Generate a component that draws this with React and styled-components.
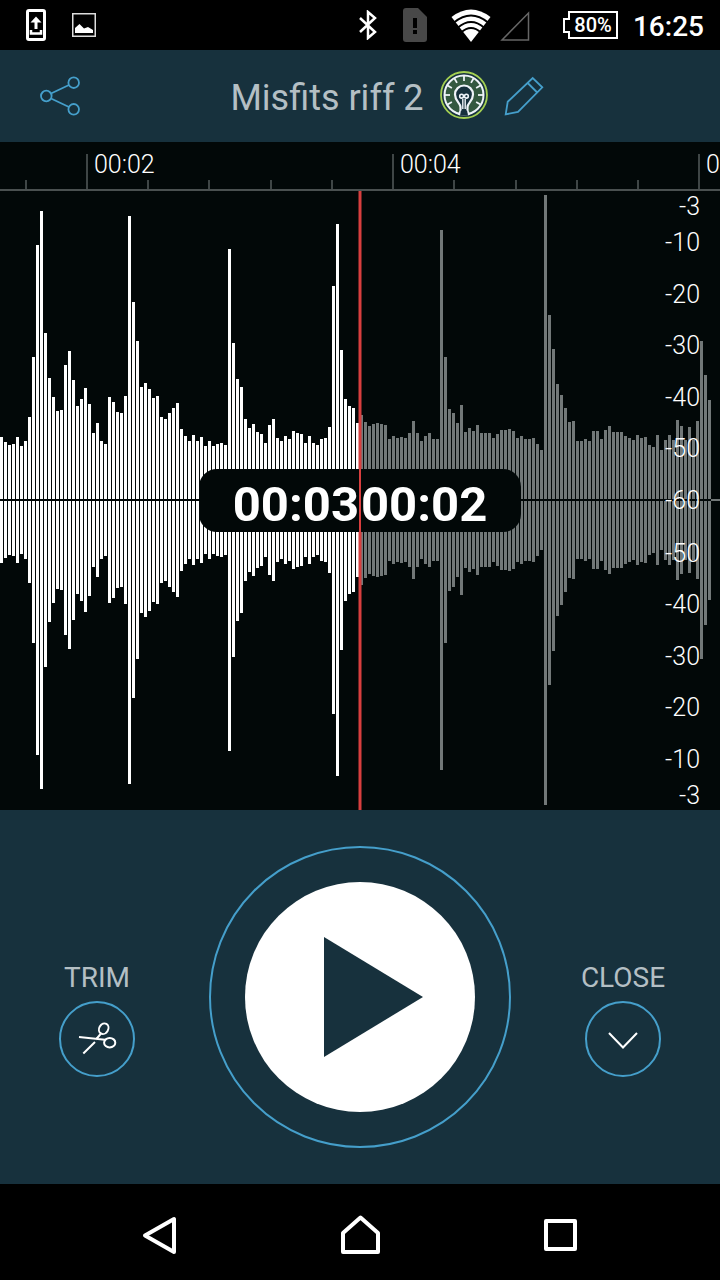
import React from 'react'
import styled, { createGlobalStyle } from 'styled-components';

const panel = '#17313d';
const accent = '#459fcb';
const muted = '#b4bfc4';
const ink = '#020808';
const red = '#d83f3f';

const GlobalStyle = createGlobalStyle`
  body {
    margin: 0;
    background-color: #000;
    font-family: Roboto, "Liberation Sans", sans-serif;
  }
  svg {
    display: block;
    flex-shrink: 0;
  }
`;

const Page = styled.div`
  display: flex;
  flex-direction: column;
  min-height: 100vh;
  background-color: ${panel};
`;

const StatusBar = styled.div`
  display: flex;
  align-items: center;
  justify-content: space-between;
  height: 50px;
  padding: 0 16px 0 26px;
  background-color: #000;
  color: #fff;
`;

const Group = styled.div`
  display: flex;
  align-items: center;
  gap: ${props => props.$gap}px;
`;

const Clock = styled.time`
  padding-top: 4px;
  font-size: 28px;
  font-weight: 500;
  line-height: 32px;
`;

const Header = styled.header`
  display: flex;
  align-items: center;
  height: 92px;
  padding: 0 26px 0 40px;
`;

const Heading = styled.div`
  display: flex;
  flex-grow: 1;
  align-items: center;
  justify-content: center;
  gap: 16px;
`;

const Title = styled.h1`
  margin: 0;
  padding-top: 4px;
  color: ${muted};
  font-size: 36px;
  font-weight: 400;
  line-height: 44px;
`;

const IconButton = styled.button`
  padding: 0;
  border: none;
  background: none;
  color: ${accent};
  cursor: pointer;
`;

const Editor = styled.main`
  position: relative;
  background-color: ${ink};
`;

const Chart = styled.svg`
  width: 100%;
  height: 668px;
  font-size: 25px;
  font-weight: 300;
  fill: #fff;
`;

const TimeBadge = styled.div`
  position: absolute;
  top: 327px;
  left: 50%;
  display: flex;
  justify-content: center;
  width: 322px;
  height: 63px;
  transform: translateX(-50%);
  border-radius: 18px;
  background-color: ${ink};
  color: #fff;
  font-size: 49px;
  font-weight: 700;
  line-height: 71px;
`;

const Elapsed = styled.span`
  flex: 1;
  border-right: 1px solid ${red};
  text-align: right;
`;

const Remaining = styled.span`
  flex: 1;
  border-left: 1px solid ${red};
`;

const Controls = styled.section`
  display: flex;
  flex-grow: 1;
  align-items: center;
  justify-content: space-between;
  padding: 36px 55px;
`;

const SideButton = styled.button`
  display: flex;
  flex-direction: column;
  align-items: center;
  gap: 7px;
  width: 84px;
  margin-top: 45px;
  padding: 0;
  border: none;
  background: none;
  color: ${muted};
  font-family: inherit;
  font-size: 28px;
  line-height: 32px;
  cursor: pointer;
`;

const Ring = styled.span`
  display: flex;
  align-items: center;
  justify-content: center;
  box-sizing: border-box;
  width: 76px;
  height: 76px;
  border: 2px solid ${accent};
  border-radius: 50%;
  color: #fff;
`;

const PlayButton = styled.button`
  display: flex;
  align-items: center;
  justify-content: center;
  box-sizing: border-box;
  width: 302px;
  height: 302px;
  padding: 0;
  border: 2px solid ${accent};
  border-radius: 50%;
  background: none;
  cursor: pointer;
`;

const NavBar = styled.nav`
  display: flex;
  align-items: center;
  height: 96px;
  padding: 0 60px;
  background-color: #000;
`;

const NavButton = styled.button`
  display: flex;
  flex: 1;
  justify-content: center;
  padding: 0;
  border: none;
  background: none;
  color: #fff;
  cursor: pointer;
`;

// half height of every bar, one bar per 4px
const peaks = [
  63, 58, 55, 56, 63, 54, 59, 83, 143, 255, 289, 167, 122, 103, 89,
  90, 135, 149, 120, 94, 101, 112, 96, 67, 77, 59, 56, 103, 98, 88,
  87, 104, 284, 198, 159, 113, 117, 111, 102, 104, 83, 81, 87, 92, 97,
  71, 64, 59, 65, 59, 63, 54, 59, 54, 56, 57, 55, 251, 157, 121,
  113, 81, 72, 76, 68, 66, 57, 75, 81, 62, 59, 64, 61, 69, 67,
  66, 57, 64, 57, 55, 61, 62, 73, 214, 276, 150, 101, 94, 92, 77,
  85, 78, 74, 76, 77, 76, 75, 61, 64, 62, 63, 62, 67, 79, 67,
  59, 64, 67, 61, 61, 270, 143, 91, 87, 77, 95, 68, 72, 69, 75,
  67, 67, 67, 62, 66, 70, 70, 71, 69, 62, 64, 61, 61, 62, 56,
  50, 305, 185, 151, 116, 105, 92, 78, 79, 59, 59, 61, 59, 69, 69,
  61, 70, 74, 68, 68, 68, 64, 62, 60, 65, 62, 63, 55, 53, 65,
  50, 60, 65, 60, 80, 74, 60, 73, 60, 79, 159, 125, 100,
];
const played = 90;
const middle = 358;
const levels = [3, 10, 20, 30, 40, 50, 60];
const ticks = [-334, -273, -212, -151, -89, -28, 33, 94, 156, 217, 278, 339];
const marks = [
  { x: -273, label: '00:02' },
  { x: 33, label: '00:04' },
  { x: 339, label: '00:06' },
];

const levelOffset = (db) => Math.round((60 - db) * 5.16);

const Waveform = () => (
  <Chart role="img" aria-label="Waveform">
    <svg x="50%" overflow="visible">
      <g shapeRendering="crispEdges">
        {ticks.map(x => {
          const major = marks.some(mark => mark.x === x);
          return <rect key={x} x={x - 1} y={major ? 12 : 38} width="2" height={major ? 35 : 9} fill="#3f4646"/>
        })}
        {peaks.map((peak, i) => (
          <rect
            key={i}
            x={(i - played) * 4}
            y={middle - peak}
            width="3"
            height={peak * 2}
            fill={i < played ? '#fff' : '#727878'}
          />
        ))}
        <rect x="-360" y={middle - 1} width="711" height="2" fill={ink}/>
        <rect x="351" y={middle - 1} width="2000" height="2" fill="#727878"/>
      </g>
      {marks.map(mark => <text key={mark.label} x={mark.x + 7} y="31">{mark.label}</text>)}
    </svg>
    <rect y="47" width="100%" height="2" fill="#4a5050"/>
    <svg x="50%" overflow="visible">
      <line y1="49" y2="668" stroke={red} strokeWidth="3"/>
    </svg>
    <g textAnchor="end">
      {levels.map(db => (
        <text key={db} x="100%" dx="-20" y={middle + 9 - levelOffset(db)}>-{db}</text>
      ))}
      {levels.filter(db => db < 60).map(db => (
        <text key={db} x="100%" dx="-20" y={middle + 10 + levelOffset(db)}>-{db}</text>
      ))}
    </g>
  </Chart>
)

const UploadIcon = () => (
  <svg width="20" height="32" fill="none" stroke="#fff">
    <rect x="1.5" y="1.5" width="17" height="29" rx="1.5" strokeWidth="3"/>
    <path d="M10 20V10" strokeWidth="3"/>
    <path d="M4.5 13.5L10 7.5l5.500 6z" fill="#fff" stroke="none"/>
    <path d="M5 21v3.500h10V21" strokeWidth="2.500"/>
  </svg>
)

const PictureIcon = () => (
  <svg width="24" height="24">
    <rect x=".75" y=".75" width="22.500" height="22.500" fill="none" stroke="#ddd" strokeWidth="1.500"/>
    <path d="M3 20v-5l4.500-4 4.500 4.500 4-1.500 5 3v3z" fill="#fff"/>
  </svg>
)

const BluetoothIcon = () => (
  <svg width="20" height="30" fill="none" stroke="#fff" strokeWidth="2.500">
    <path d="M2 8l15 14-7 6V2l7 6L2 22"/>
  </svg>
)

const SimIcon = () => (
  <svg width="25" height="34">
    <path d="M4 0h12l9 9v22a3 3 0 0 1-3 3H4a3 3 0 0 1-3-3V3a3 3 0 0 1 3-3z" fill="#484848"/>
    <path d="M11 10h4v10h-4zM11 22h4v4h-4z" fill="#000"/>
  </svg>
)

const WifiIcon = () => (
  <svg width="40" height="34">
    <path d="M20 34L.500 9Q20-6 39.500 9z" fill="#fff"/>
    <g fill="none" stroke="#000" strokeWidth="1.700">
      <path d="M3 14.500Q20 .500 37 14.500"/>
      <path d="M7 19.500Q20 8.500 33 19.500"/>
      <path d="M10 24.500Q20 15.500 30 24.500"/>
    </g>
  </svg>
)

const SignalIcon = () => (
  <svg width="32" height="32" fill="none" stroke="#666" strokeWidth="1.500">
    <path d="M3 31L29.500 4v27z"/>
  </svg>
)

const BatteryIcon = () => (
  <svg width="55" height="30">
    <path d="M6 2h48v26H6v-6H1V9h5z" fill="none" stroke="#fff" strokeWidth="2"/>
    <text x="30" y="22" textAnchor="middle" fontSize="20" fontWeight="500" fill="#fff">80%</text>
  </svg>
)

const ShareIcon = () => (
  <svg width="40" height="40" fill="none" stroke="currentColor" strokeWidth="1.800">
    <circle cx="6.300" cy="20" r="5.300"/>
    <circle cx="33.700" cy="6.700" r="5.300"/>
    <circle cx="33.700" cy="33.300" r="5.300"/>
    <path d="M11 17.500L29 9M11 22.500L29 31"/>
  </svg>
)

const BulbIcon = () => (
  <svg width="48" height="50" viewBox="-24 -24 48 50" fill="none" stroke="#eef3f8">
    <circle r="23" fill={panel} stroke="#a3cf52" strokeWidth="1.800"/>
    <circle r="19.500" fill="#335840" strokeWidth="2"/>
    {[-120, -90, -60, -30, 0, 30, 60, 90, 120].map(angle => (
      <path key={angle} d="M0-19v5" strokeWidth="1.800" transform={`rotate(${angle})`}/>
    ))}
    <path d="M-3.500 16v-4c0-4-5.500-6-5.500-12.500a9 9 0 0 1 18 0c0 6.500-5.500 8.500-5.500 12.500v4l1.500 4M-3.500 16l-1.500 4" fill={panel} strokeWidth="2.200"/>
    <path d="M-1.200 14V4M1.200 14V4" strokeWidth="1.400"/>
    <circle cx="-2.400" cy="1.200" r="1.900" strokeWidth="1.600"/>
    <circle cx="2.400" cy="1.200" r="1.900" strokeWidth="1.600"/>
    <path d="M-3 15.500h6l1 5h-8z" fill={panel} stroke="none"/>
  </svg>
)

const PencilIcon = () => (
  <svg width="40" height="40" fill="none" stroke="currentColor" strokeWidth="1.800">
    <path d="M1.700 38.300l2-12.500L28.700 2l9.600 9.300L14 36zM23.700 7l9.500 9.500"/>
  </svg>
)

const ScissorsIcon = () => (
  <svg width="40" height="40" fill="none" stroke="currentColor" strokeWidth="2">
    <path d="M2 18l26 2.700M24 14.500L19 20.500M18 23L6.300 34.500"/>
    <ellipse cx="26.700" cy="9.700" rx="4.500" ry="5.500" transform="rotate(30 26.700 9.700)"/>
    <ellipse cx="32.700" cy="23.700" rx="5.600" ry="4.700"/>
  </svg>
)

const App = () => {
    return (
        <Page>
            <GlobalStyle/>
            <StatusBar>
                <Group $gap={26}>
                    <UploadIcon/>
                    <PictureIcon/>
                </Group>
                <Group $gap={32}>
                    <Group $gap={24}>
                        <BluetoothIcon/>
                        <SimIcon/>
                        <Group $gap={8}>
                            <WifiIcon/>
                            <SignalIcon/>
                        </Group>
                    </Group>
                    <Group $gap={15}>
                        <BatteryIcon/>
                        <Clock>16:25</Clock>
                    </Group>
                </Group>
            </StatusBar>
            <Header>
                <IconButton aria-label="Share"><ShareIcon/></IconButton>
                <Heading>
                    <Title>Misfits riff 2</Title>
                    <IconButton aria-label="Ideas"><BulbIcon/></IconButton>
                    <IconButton aria-label="Rename"><PencilIcon/></IconButton>
                </Heading>
            </Header>
            <Editor>
                <Waveform/>
                <TimeBadge>
                    <Elapsed>00:03</Elapsed>
                    <Remaining>00:02</Remaining>
                </TimeBadge>
            </Editor>
            <Controls>
                <SideButton>
                    TRIM
                    <Ring><ScissorsIcon/></Ring>
                </SideButton>
                <PlayButton aria-label="Play">
                    <svg width="230" height="230">
                        <circle cx="115" cy="115" r="115" fill="#fff"/>
                        <path d="M79 55l99 60-99 60z" fill={panel}/>
                    </svg>
                </PlayButton>
                <SideButton>
                    CLOSE
                    <Ring>
                        <svg width="40" height="40" fill="none" stroke="currentColor" strokeWidth="2">
                            <path d="M6 14l14 14.500L34 14"/>
                        </svg>
                    </Ring>
                </SideButton>
            </Controls>
            <NavBar>
                <NavButton aria-label="Back">
                    <svg width="48" height="48" fill="none" stroke="currentColor" strokeWidth="4" strokeLinejoin="round">
                        <path d="M9 27.500L38 11v33z"/>
                    </svg>
                </NavButton>
                <NavButton aria-label="Home">
                    <svg width="48" height="48" fill="none" stroke="currentColor" strokeWidth="4" strokeLinejoin="round">
                        <path d="M24.500 9.500L42 25v19H7V25z"/>
                    </svg>
                </NavButton>
                <NavButton aria-label="Recent apps">
                    <svg width="48" height="48" fill="none" stroke="currentColor" strokeWidth="4" strokeLinejoin="round">
                        <path d="M10 13h29v28H10z"/>
                    </svg>
                </NavButton>
            </NavBar>
        </Page>
    )
}

export default App;
